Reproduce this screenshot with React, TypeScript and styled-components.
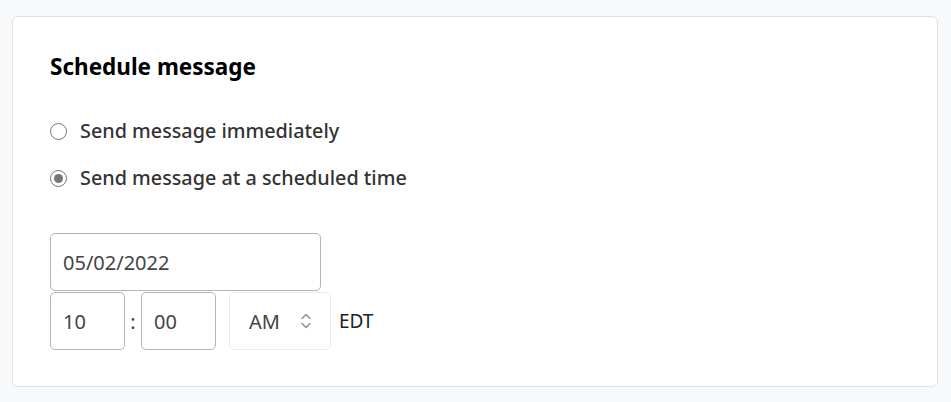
import React from "react";
import styled, { createGlobalStyle } from "styled-components";

const Global = createGlobalStyle`
  html, body { margin: 0; padding: 0; background: #f8f9fa; }
  body { font-family: "Noto Sans", "Open Sans", sans-serif; }
  * { box-sizing: border-box; }
`;

const Page = styled.div`
  padding: 16px 13px 15px 12px;
`;

const Card = styled.section`
  background: #fff;
  border: 1px solid #dee2e6;
  border-radius: 6px;
  padding: 37px 37px 36px 37px;
  display: flex;
  flex-direction: column;
`;

const Title = styled.h2`
  margin: 0 0 39px 0;
  font-size: 22.5px;
  line-height: 26px;
  font-weight: 700;
  color: #000;
`;

const Options = styled.div`
  display: flex;
  flex-direction: column;
  gap: 23px;
  margin-bottom: 43px;
`;

const Option = styled.label`
  display: flex;
  align-items: center;
  gap: 13px;
  font-size: 19.8px;
  line-height: 24px;
  color: #333;
  font-weight: 500;
`;

const Radio = styled.span<{ $checked?: boolean }>`
  width: 17px;
  height: 17px;
  border-radius: 50%;
  border: 1.5px solid #767676;
  display: flex;
  align-items: center;
  justify-content: center;
  flex: none;
  &::after {
    content: "";
    width: 9px;
    height: 9px;
    border-radius: 50%;
    background: ${(p) => (p.$checked ? "#767676" : "transparent")};
  }
`;

const Field = styled.div<{ $w: number; $light?: boolean }>`
  width: ${(p) => p.$w}px;
  height: 58px;
  border: 1px solid ${(p) => (p.$light ? "#ececec" : "#b5b5b5")};
  border-radius: 5px;
  display: flex;
  align-items: center;
  padding: 0 12px;
  font-size: 20px;
  color: #444;
  background: #fff;
`;

const TimeRow = styled.div`
  display: flex;
  align-items: center;
  margin-top: 1px;
`;

const Colon = styled.span`
  width: 16px;
  text-align: center;
  font-size: 20px;
  color: #444;
`;

const Select = styled(Field)`
  margin-left: 13px;
  padding: 0 18px 0 19px;
  justify-content: space-between;
`;

const Zone = styled.span`
  margin-left: 8px;
  font-size: 19px;
  color: #222;
`;

const Chevrons = () => (
  <svg width="12" height="18" viewBox="0 0 12 18" fill="none" stroke="#8a8a8a" strokeWidth="1.3" strokeLinecap="round" strokeLinejoin="round">
    <path d="M2 6.5 L6 2.5 L10 6.5" />
    <path d="M2 11.5 L6 15.5 L10 11.5" />
  </svg>
);

export default function App() {
  return (
    <Page>
      <Global />
      <Card>
        <Title>Schedule message</Title>
        <Options>
          <Option>
            <Radio />
            Send message immediately
          </Option>
          <Option>
            <Radio $checked />
            Send message at a scheduled time
          </Option>
        </Options>
        <Field $w={271}>05/02/2022</Field>
        <TimeRow>
          <Field $w={75}>10</Field>
          <Colon>:</Colon>
          <Field $w={75}>00</Field>
          <Select $w={102} $light>
            AM
            <Chevrons />
          </Select>
          <Zone>EDT</Zone>
        </TimeRow>
      </Card>
    </Page>
  );
}
